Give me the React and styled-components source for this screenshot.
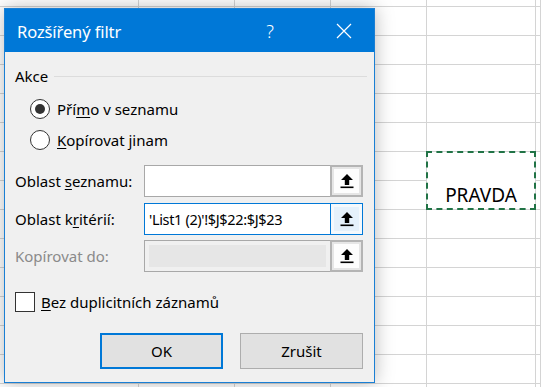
import React from "react";
import styled, { createGlobalStyle } from "styled-components";

const Global = createGlobalStyle`
  html, body { margin: 0; padding: 0; background: #fff; }
  body { font-family: "Noto Sans", "Open Sans", sans-serif; overflow: hidden; }
  * { box-sizing: border-box; }
`;

const Stage = styled.div`
  position: relative;
  width: 541px;
  height: 387px;
  overflow: hidden;
  background: #fff;
`;

const Sheet = styled.div`
  display: grid;
  grid-template-columns: 139px 96px 96px 96px 109px 1fr;
  grid-template-rows: 7px repeat(14, 29px);
  width: 541px;
`;

const Cell = styled.div`
  border-right: 1px solid #d4d4d4;
  border-bottom: 1px solid #d4d4d4;
`;

const ValueCell = styled.div`
  position: relative;
  grid-column: 5;
  grid-row: 7 / span 2;
  border-right: 1px solid #d4d4d4;
  border-bottom: 1px solid #d4d4d4;
  display: flex;
  align-items: flex-end;
  justify-content: center;
  padding-bottom: 2px;
  font-family: "Noto Sans", sans-serif;
  font-size: 19px;
  line-height: 24px;
  color: #000;
`;

const Marquee = styled.div`
  position: absolute;
  left: -1px;
  top: -1px;
  right: -1px;
  bottom: -1px;
  border: 2px dashed #217346;
`;

const Dialog = styled.div`
  position: absolute;
  left: 4px;
  top: 8px;
  width: 371px;
  height: 375px;
  border: 1px solid #1a7fd4;
  background: #f0f0f0;
  box-shadow: 0 0 18px rgba(0, 0, 0, 0.28);
  display: flex;
  flex-direction: column;
`;

const TitleBar = styled.div`
  height: 43px;
  background: #0078d7;
  color: #fff;
  display: flex;
  align-items: center;
  padding-left: 12px;
  flex-shrink: 0;
`;

const Title = styled.div`
  flex: 1;
  font-size: 16.5px;
  letter-spacing: -0.1px;
  padding-top: 1px;
`;

const TitleButton = styled.div`
  width: ${(p) => p.$w}px;
  height: 43px;
  display: flex;
  align-items: center;
  justify-content: center;
  font-size: 18px;
  font-weight: 300;
`;

const Body = styled.div`
  padding: 14px 11px 0 10px;
  display: flex;
  flex-direction: column;
  font-size: 15px;
  color: #000;
`;

const GroupHeader = styled.div`
  height: 20px;
  display: flex;
  align-items: center;
  gap: 6px;
  &::after {
    content: "";
    flex: 1;
    height: 1px;
    background: #dcdcdc;
    margin-right: -4px;
  }
`;

const RadioList = styled.div`
  margin-top: 7px;
  padding-left: 15px;
  display: flex;
  flex-direction: column;
`;

const RadioRow = styled.div`
  height: 31px;
  display: flex;
  align-items: center;
  gap: 7px;
`;

const RadioCircle = styled.div`
  width: 20px;
  height: 20px;
  border-radius: 50%;
  border: 1px solid #333;
  background: #fff;
  display: flex;
  align-items: center;
  justify-content: center;
  &::after {
    content: "";
    width: 10px;
    height: 10px;
    border-radius: 50%;
    background: ${(p) => (p.$checked ? "#333" : "transparent")};
  }
`;

const Fields = styled.div`
  margin-top: 10px;
  display: flex;
  flex-direction: column;
  gap: 5.5px;
`;

const FieldRow = styled.div`
  height: 32px;
  display: grid;
  grid-template-columns: 129px 1fr;
  align-items: center;
  color: ${(p) => (p.$disabled ? "#8a8a8a" : "#000")};
`;

const Input = styled.div`
  height: 32px;
  display: flex;
  border: 1px solid ${(p) => (p.$focused ? "#0078d7" : "#a8a8a8")};
  background: ${(p) => (p.$disabled ? "#f0f0f0" : "#fff")};
`;

const InputText = styled.div`
  flex: 1;
  margin: ${(p) => (p.$disabled ? "4px" : "0")};
  background: ${(p) => (p.$disabled ? "#e6e6e6" : "transparent")};
  padding-left: 4px;
  display: flex;
  align-items: center;
  color: #000;
  font-size: 14.5px;
  letter-spacing: -0.35px;
`;

const PickButton = styled.div`
  width: 33px;
  margin: -1px -1px -1px 0;
  border: 2px solid ${(p) => (p.$focused ? "#0078d7" : "#b4b4b4")};
  border-width: ${(p) => (p.$focused ? "1px" : "2px")};
  padding: ${(p) => (p.$focused ? "3px" : "2px")};
  background: ${(p) => (p.$focused ? "#f4f9fd" : "#e6e6e6")};
  display: flex;
`;

const PickInner = styled.div`
  flex: 1;
  background: ${(p) => (p.$focused ? "#e5f1fb" : "#fdfdfd")};
  display: flex;
  align-items: center;
  justify-content: center;
`;

const CheckRow = styled.div`
  margin-top: 20px;
  height: 20px;
  display: flex;
  align-items: center;
  gap: 6px;
`;

const CheckBox = styled.div`
  width: 20px;
  height: 20px;
  border: 1px solid #333;
  background: #fff;
`;

const Buttons = styled.div`
  margin-top: 21px;
  display: flex;
  justify-content: flex-end;
  gap: 17px;
`;

const Button = styled.div`
  width: 123px;
  height: 36px;
  display: flex;
  align-items: center;
  justify-content: center;
  background: #e1e1e1;
  border: ${(p) => (p.$default ? "2px solid #0078d7" : "1px solid #adadad")};
  font-size: 15px;
`;

const Acc = styled.span`
  text-decoration: underline;
  text-underline-offset: 2px;
  text-decoration-thickness: 1px;
`;

const PickIcon = () => (
  <svg width="14" height="16" viewBox="0 0 14 16">
    <path d="M7 1 L13 7 H9.2 V12 H4.8 V7 H1 Z" fill="#000" />
    <rect x="0.5" y="13.5" width="13" height="1.6" fill="#000" />
  </svg>
);

const CloseIcon = () => (
  <svg width="16" height="16" viewBox="0 0 16 16">
    <path d="M1 1 L15 15 M15 1 L1 15" stroke="#fff" strokeWidth="1.2" />
  </svg>
);

export default function App() {
  const cells = [];
  for (let r = 0; r < 15; r++) {
    for (let c = 0; c < 6; c++) {
      if (c === 4 && (r === 6 || r === 7)) continue;
      cells.push(<Cell key={`${r}-${c}`} style={{ gridRow: r + 1, gridColumn: c + 1 }} />);
    }
  }
  return (
    <Stage>
      <Global />
      <Sheet>
        {cells}
        <ValueCell>
          PRAVDA
          <Marquee />
        </ValueCell>
      </Sheet>
      <Dialog>
        <TitleBar>
          <Title>Rozšířený filtr</Title>
          <TitleButton $w={36}>?</TitleButton>
          <TitleButton $w={60} style={{ marginLeft: 26 }}>
            <CloseIcon />
          </TitleButton>
        </TitleBar>
        <Body>
          <GroupHeader>Akce</GroupHeader>
          <RadioList>
            <RadioRow>
              <RadioCircle $checked />
              <span>
                Pří<Acc>m</Acc>o v seznamu
              </span>
            </RadioRow>
            <RadioRow>
              <RadioCircle />
              <span>
                <Acc>K</Acc>opírovat jinam
              </span>
            </RadioRow>
          </RadioList>
          <Fields>
            <FieldRow>
              <span>
                Oblast <Acc>s</Acc>eznamu:
              </span>
              <Input>
                <InputText />
                <PickButton>
                  <PickInner>
                    <PickIcon />
                  </PickInner>
                </PickButton>
              </Input>
            </FieldRow>
            <FieldRow>
              <span>
                Oblast k<Acc>r</Acc>itérií:
              </span>
              <Input $focused>
                <InputText>'List1 (2)'!$J$22:$J$23</InputText>
                <PickButton $focused>
                  <PickInner $focused>
                    <PickIcon />
                  </PickInner>
                </PickButton>
              </Input>
            </FieldRow>
            <FieldRow $disabled>
              <span>Kopírovat do:</span>
              <Input $disabled>
                <InputText $disabled />
                <PickButton>
                  <PickInner>
                    <PickIcon />
                  </PickInner>
                </PickButton>
              </Input>
            </FieldRow>
          </Fields>
          <CheckRow>
            <CheckBox />
            <span>
              <Acc>B</Acc>ez duplicitních záznamů
            </span>
          </CheckRow>
          <Buttons>
            <Button $default>OK</Button>
            <Button>Zrušit</Button>
          </Buttons>
        </Body>
      </Dialog>
    </Stage>
  );
}
